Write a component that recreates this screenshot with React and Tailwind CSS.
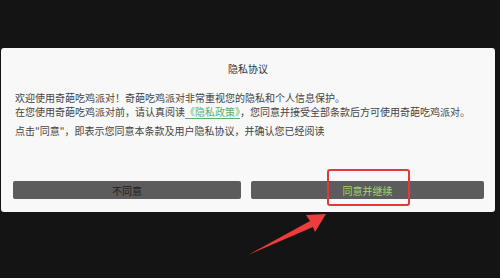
import React from "react";

export default function App() {
  const font = { fontFamily: '"Noto Sans CJK SC", "Noto Sans", sans-serif' };
  return (
    <div className="relative w-[500px] h-[278px] bg-[#141414] pt-[48px] pl-[1px] pr-[5px] overflow-hidden" style={font}>
      <div className="h-[164px] bg-[#f8f8f8] rounded-[3px] flex flex-col pt-[14px] pb-[13px]">
        <div className="text-center text-[10px] leading-[14px] text-[#333]">隐私协议</div>
        <div className="px-[14px] mt-[15px] text-[10px] leading-[14px] text-[#444]">
          <p>欢迎使用奇葩吃鸡派对！奇葩吃鸡派对非常重视您的隐私和个人信息保护。</p>
          <p>
            在您使用奇葩吃鸡派对前，请认真阅读
            <span className="text-[#5fae6a] underline underline-offset-2">《隐私政策》</span>
            ，您同意并接受全部条款后方可使用奇葩吃鸡派对。
          </p>
          <p className="mt-[5px]">点击"同意"，即表示您同意本条款及用户隐私协议，并确认您已经阅读</p>
        </div>
        <div className="mt-auto flex gap-[10px] pl-[12px] pr-[11px]">
          <div className="w-[228px] h-[18px] bg-[#5c5c5c] rounded-[2px] flex items-center justify-center text-[10px] text-[#1c1c1c]">
            不同意
          </div>
          <div className="flex-1 h-[18px] bg-[#5c5c5c] rounded-[2px] flex items-center justify-center text-[10px] text-[#9ed870]">
            同意并继续
          </div>
        </div>
      </div>
      <div className="absolute left-[327px] top-[169px] w-[83px] h-[37px] border-2 border-[#e5383b] rounded-[3px]" />
      <svg className="absolute left-0 top-0" width="500" height="278" viewBox="0 0 500 278">
        <polygon
          points="248,255 310,221 306,215 326,214 315,232 313,227"
          fill="#ee3b3b"
        />
      </svg>
    </div>
  );
}
